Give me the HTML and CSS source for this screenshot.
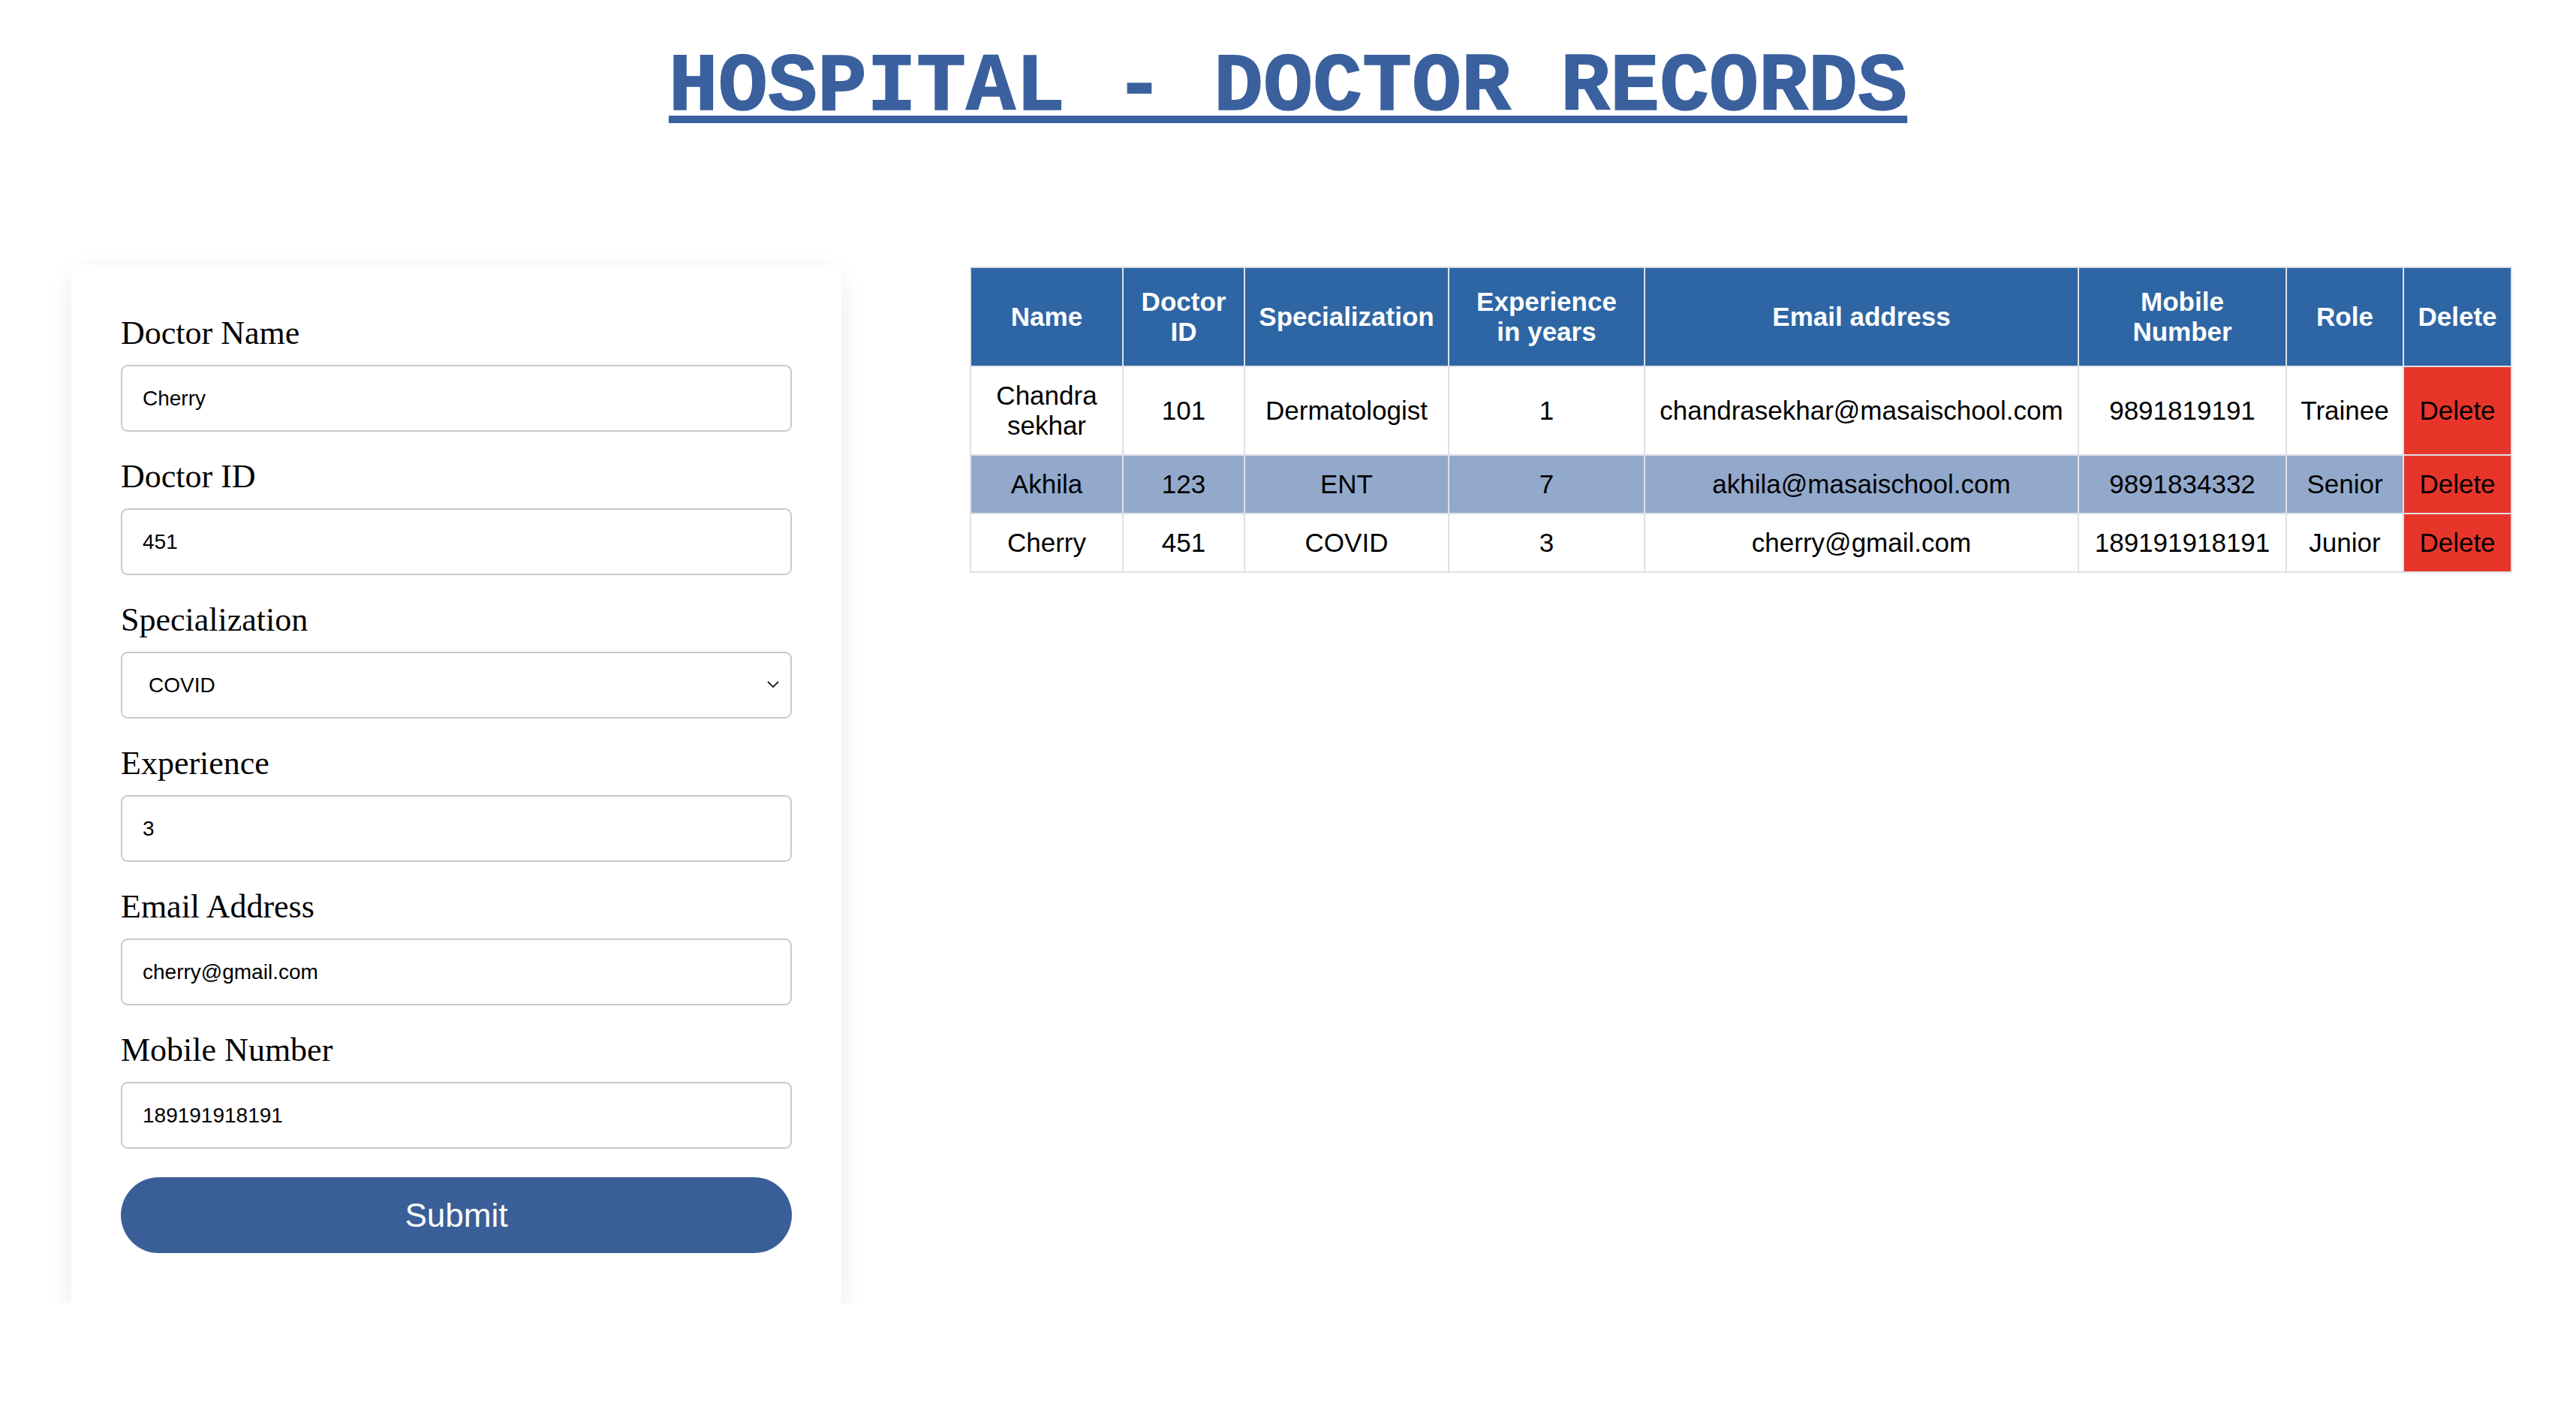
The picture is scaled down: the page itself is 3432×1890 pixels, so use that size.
FILE: index.html
```html
<!DOCTYPE html>
<html lang="en">
<head>
<meta charset="utf-8">
<title>Hospital - Doctor Records</title>
<link rel="stylesheet" href="styles.css">
</head>
<body>
<h1 class="title">HOSPITAL - DOCTOR RECORDS</h1>
<div class="main">
  <form class="card">
    <label class="lbl">Doctor Name</label>
    <input class="field" type="text" value="Cherry">
    <label class="lbl">Doctor ID</label>
    <input class="field" type="text" value="451">
    <label class="lbl">Specialization</label>
    <div class="select-wrap">
      <select class="field sel">
        <option>COVID</option>
      </select>
      <svg class="chev" width="18" height="12" viewBox="0 0 18 12"><path d="M2 2 L9 9 L16 2" fill="none" stroke="#222" stroke-width="1.8"/></svg>
    </div>
    <label class="lbl">Experience</label>
    <input class="field" type="text" value="3">
    <label class="lbl">Email Address</label>
    <input class="field" type="text" value="cherry@gmail.com">
    <label class="lbl">Mobile Number</label>
    <input class="field" type="text" value="189191918191">
    <button class="submit" type="button">Submit</button>
  </form>
  <div class="table-wrap">
    <table class="records">
      <colgroup>
        <col class="c-name"><col class="c-id"><col class="c-spec"><col class="c-exp"><col class="c-email"><col class="c-mob"><col class="c-role"><col class="c-del">
      </colgroup>
      <thead>
        <tr>
          <th>Name</th><th>Doctor ID</th><th>Specialization</th><th>Experience in years</th><th>Email address</th><th>Mobile Number</th><th>Role</th><th>Delete</th>
        </tr>
      </thead>
      <tbody>
        <tr>
          <td>Chandra sekhar</td><td>101</td><td>Dermatologist</td><td>1</td><td>chandrasekhar@masaischool.com</td><td>9891819191</td><td>Trainee</td><td class="del">Delete</td>
        </tr>
        <tr class="alt">
          <td>Akhila</td><td>123</td><td>ENT</td><td>7</td><td>akhila@masaischool.com</td><td>9891834332</td><td>Senior</td><td class="del">Delete</td>
        </tr>
        <tr>
          <td>Cherry</td><td>451</td><td>COVID</td><td>3</td><td>cherry@gmail.com</td><td>189191918191</td><td>Junior</td><td class="del">Delete</td>
        </tr>
      </tbody>
    </table>
  </div>
</div>
</body>
</html>
```
FILE: styles.css
```css
html, body {
  margin: 0;
  padding: 0;
  background: #ffffff;
}

body {
  font-family: "Liberation Serif", "Times New Roman", serif;
  color: #000;
}

.title {
  margin: 0;
  padding-top: 54px;
  text-align: center;
  font-family: "Liberation Mono", "Courier New", monospace;
  font-weight: bold;
  font-size: 110px;
  line-height: 125px;
  color: #3a619e;
  -webkit-text-stroke: 1.5px #3a619e;
  text-decoration: underline;
  text-decoration-thickness: 10px;
  text-underline-offset: 8px;
}

.main {
  display: flex;
  align-items: flex-start;
  gap: 171px;
  padding-left: 95px;
  margin-top: 174px;
}

.card {
  width: 1026px;
  box-sizing: border-box;
  padding: 66px 66px 67px 66px;
  background: #fff;
  box-shadow: 0 22px 40px rgba(0, 0, 0, 0.06), 0 0 24px rgba(0, 0, 0, 0.035);
  display: flex;
  flex-direction: column;
}

.lbl {
  display: block;
  font-family: "Liberation Serif", "Times New Roman", serif;
  font-size: 44px;
  line-height: 50px;
  margin-bottom: 17px;
}

.field {
  display: block;
  width: 100%;
  height: 89px;
  box-sizing: border-box;
  border: 2px solid #c9c9c9;
  border-radius: 9px;
  padding: 0 27px;
  font-family: "Liberation Sans", Arial, sans-serif;
  font-size: 28px;
  color: #000;
  background: #fff;
  margin: 0 0 35px 0;
  outline: none;
}

.select-wrap {
  position: relative;
}

.sel {
  appearance: none;
  -webkit-appearance: none;
  padding-left: 35px;
}

.chev {
  position: absolute;
  right: 16px;
  top: 38px;
}

.submit {
  margin-top: 3px;
  height: 101px;
  width: 100%;
  border: none;
  border-radius: 51px;
  background: #3a5f98;
  color: #fff;
  font-family: "Liberation Sans", Arial, sans-serif;
  font-size: 44px;
}

.table-wrap {
  margin-top: 2px;
}

.records {
  table-layout: fixed;
  width: 2053px;
  border-collapse: collapse;
  font-family: "Liberation Sans", Arial, sans-serif;
  font-size: 35px;
  line-height: 40px;
  text-align: center;
}

.c-name { width: 203px; }
.c-id { width: 162px; }
.c-spec { width: 272px; }
.c-exp { width: 261px; }
.c-email { width: 578px; }
.c-mob { width: 277px; }
.c-role { width: 156px; }
.c-del { width: 144px; }

.records th,
.records td {
  border: 2px solid #dde1e6;
  padding: 18px 17px;
  vertical-align: middle;
}

.records th {
  background: #2e66a5;
  color: #fff;
  font-weight: bold;
  padding-top: 25px;
  padding-bottom: 25px;
}

.records tr.alt td {
  background: #93a9cb;
}

.records td.del,
.records tr.alt td.del {
  background: #e8352a;
  color: #000;
}
```
